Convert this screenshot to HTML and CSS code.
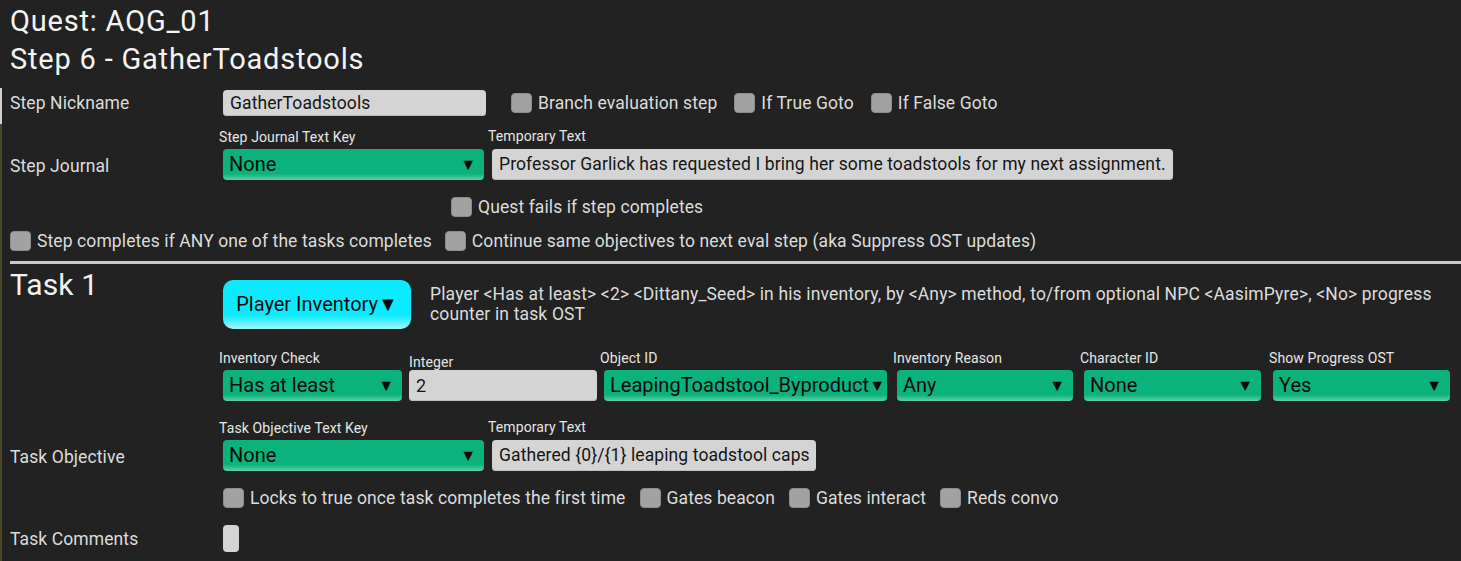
FILE: index.html
```html
<!DOCTYPE html>
<html lang="en">

<head>
    <meta charset="UTF-8">
    <meta name="viewport" content="width=device-width, initial-scale=1.0">
    <title>Quest Editor</title>
    <link rel="stylesheet" href="styles.css">
</head>

<body>
    <div class="edgeBar"></div>
    <div class="page">
        <h1 class="title">Quest: AQG_01</h1>
        <h1 class="title">Step 6 - GatherToadstools</h1>

        <!-- step settings -->
        <div class="row nickRow">
            <div class="label">Step Nickname</div>
            <div class="textBox nickBox">GatherToadstools</div>
            <label class="check branchCheck"><span class="box"></span>Branch evaluation step</label>
            <label class="check"><span class="box"></span>If True Goto</label>
            <label class="check"><span class="box"></span>If False Goto</label>
        </div>

        <div class="row journalRow">
            <div class="label">Step Journal</div>
            <div class="field">
                <div class="smallLabel">Step Journal Text Key</div>
                <div class="drop keyDrop">None<span class="arrow">&#9660;</span></div>
            </div>
            <div class="field tempField">
                <div class="smallLabel">Temporary Text</div>
                <div class="textBox">Professor Garlick has requested I bring her some toadstools for my next assignment.</div>
            </div>
        </div>

        <div class="row failRow">
            <label class="check"><span class="box"></span>Quest fails if step completes</label>
        </div>

        <div class="row anyRow">
            <label class="check"><span class="box"></span>Step completes if ANY one of the tasks completes</label>
            <label class="check"><span class="box"></span>Continue same objectives to next eval step (aka Suppress OST updates)</label>
        </div>

        <div class="divider"></div>

        <!-- task 1 -->
        <div class="row taskRow">
            <div class="label taskTitle">Task 1</div>
            <div class="typeBtn">Player Inventory&#9660;</div>
            <p class="taskDesc">Player &lt;Has at least&gt; &lt;2&gt; &lt;Dittany_Seed&gt; in his inventory, by &lt;Any&gt; method, to/from optional NPC &lt;AasimPyre&gt;, &lt;No&gt; progress counter in task OST</p>
        </div>

        <div class="row paramRow">
            <div class="label"></div>
            <div class="field w179">
                <div class="smallLabel">Inventory Check</div>
                <div class="drop">Has at least<span class="arrow">&#9660;</span></div>
            </div>
            <div class="field w188">
                <div class="smallLabel low">Integer</div>
                <div class="textBox numBox">2</div>
            </div>
            <div class="field w283">
                <div class="smallLabel">Object ID</div>
                <div class="drop tight">LeapingToadstool_Byproduct<span class="arrow">&#9660;</span></div>
            </div>
            <div class="field w176 gap10">
                <div class="smallLabel">Inventory Reason</div>
                <div class="drop">Any<span class="arrow">&#9660;</span></div>
            </div>
            <div class="field w177 gap11">
                <div class="smallLabel">Character ID</div>
                <div class="drop">None<span class="arrow">&#9660;</span></div>
            </div>
            <div class="field w177 gap12">
                <div class="smallLabel">Show Progress OST</div>
                <div class="drop">Yes<span class="arrow">&#9660;</span></div>
            </div>
        </div>

        <div class="row objRow">
            <div class="label">Task Objective</div>
            <div class="field">
                <div class="smallLabel">Task Objective Text Key</div>
                <div class="drop keyDrop">None<span class="arrow">&#9660;</span></div>
            </div>
            <div class="field tempField">
                <div class="smallLabel">Temporary Text</div>
                <div class="textBox">Gathered {0}/{1} leaping toadstool caps</div>
            </div>
        </div>

        <div class="row gateRow">
            <div class="label"></div>
            <label class="check"><span class="box"></span>Locks to true once task completes the first time</label>
            <label class="check"><span class="box"></span>Gates beacon</label>
            <label class="check"><span class="box"></span>Gates interact</label>
            <label class="check"><span class="box"></span>Reds convo</label>
        </div>

        <div class="row commentRow">
            <div class="label">Task Comments</div>
            <div class="commentBox"></div>
        </div>
    </div>
</body>

</html>
```

FILE: styles.css
```css
* {margin: 0; padding: 0; box-sizing: border-box;}
html, body {height: 100%; overflow: hidden;}
body {background: #222222; color: #e4e4e4; font-family: Roboto, "Liberation Sans", sans-serif; position: relative;}

.edgeBar {position: absolute; left: 0; top: 88px; width: 2px; height: 473px; background: #4a4a22;}
.edgeBar:before {content: ""; display: block; height: 36px; background: #cfcfcf;}

.page {padding: 2px 0 0 10px;}
.title {font-size: 29px; font-weight: 400; letter-spacing: 0.8px; line-height: 38px; color: #f4f4f4;}

.row {display: flex; align-items: center;}
.label {width: 213px; flex: none; font-size: 17.5px; letter-spacing: 0.1px; color: #dcdcdc;}

/* controls */
.textBox {background: #d4d4d4; color: #151515; border-radius: 4px; font-size: 17.5px; letter-spacing: 0.1px; height: 31px; line-height: 31px; padding: 0 7px; white-space: nowrap; box-shadow: inset 0 -1px 0 #bdbdbd;}
.drop {position: relative; background: linear-gradient(#0bb27b 0, #0bb27b 80%, #5fd0a6 100%); color: #0a0a0a; border-radius: 4px; height: 31px; line-height: 31px; font-size: 20px; padding: 0 26px 0 6px; white-space: nowrap; overflow: hidden;}
.drop .arrow {position: absolute; right: 8px; top: 0; font-size: 16px;}
.drop.tight {padding-right: 18px;}
.drop.tight .arrow {right: 2px;}

.check {display: flex; align-items: center; font-size: 17.5px; letter-spacing: 0.1px; color: #dcdcdc; margin-right: 16px;}
.check .box {width: 21px; height: 20px; background: #a2a2a2; border: 1px solid #8c8c8c; border-radius: 4px; margin-right: 6px; flex: none;}

.field {display: flex; flex-direction: column;}
.smallLabel {font-size: 14px; letter-spacing: 0.1px; height: 19px; line-height: 15px; margin-left: -4px; color: #e6e6e6; white-space: nowrap;}
.smallLabel.low {margin-left: 0; padding-top: 4px;}

/* rows */
.nickRow {margin-top: 11px; height: 27px;}
.nickBox {width: 263px; height: 26px; line-height: 26px; margin-right: 25px;}
.nickRow .check {margin-right: 17px;}

.journalRow {margin-top: 13px;}
.journalRow .label, .objRow .label {padding-top: 22px;}
.keyDrop {width: 261px;}
.tempField {margin-left: 8px;}
.tempField .textBox {margin-top: 1px;}

.failRow {margin-top: 17px; padding-left: 441px;}
.anyRow {margin-top: 14px;}
.anyRow .check {margin-right: 13px;}

.divider {height: 3px; background: #c8c8c8; margin-top: 10px;}

.taskRow {align-items: flex-start; margin-top: 14px;}
.taskTitle {font-size: 30px; color: #f2f2f2; line-height: 20px; margin-top: -3px;}
.typeBtn {flex: none; width: 188px; height: 49px; line-height: 48px; margin-top: 2px; text-align: center; font-size: 20px; color: #0a0a0a; border-radius: 10px; background: linear-gradient(#0ceaff 0, #0ceaff 72%, #a3f6ff 100%);}
.taskDesc {font-size: 17.5px; letter-spacing: 0.15px; line-height: 20px; color: #dcdcdc; margin: 6px 12px 0 19px;}

.paramRow {margin-top: 22px; align-items: flex-end;}
.paramRow .field {margin-right: 7px;}
.w179 {width: 179px;}
.w188 {width: 188px;}
.w283 {width: 283px;}
.w176 {width: 176px;}
.w177 {width: 177px;}
.gap10 {margin-left: 3px;}
.gap11 {margin-left: 4px;}
.gap12 {margin-left: 5px;}
.numBox {font-size: 18px;}

.objRow {margin-top: 19px;}
.objRow .tempField .textBox {padding-right: 6px;}

.gateRow {margin-top: 17px;}
.gateRow .check {margin-right: 14px;}

.commentRow {margin-top: 17px;}
.commentBox {width: 16px; height: 27px; background: #d4d4d4; border-radius: 4px;}
```
